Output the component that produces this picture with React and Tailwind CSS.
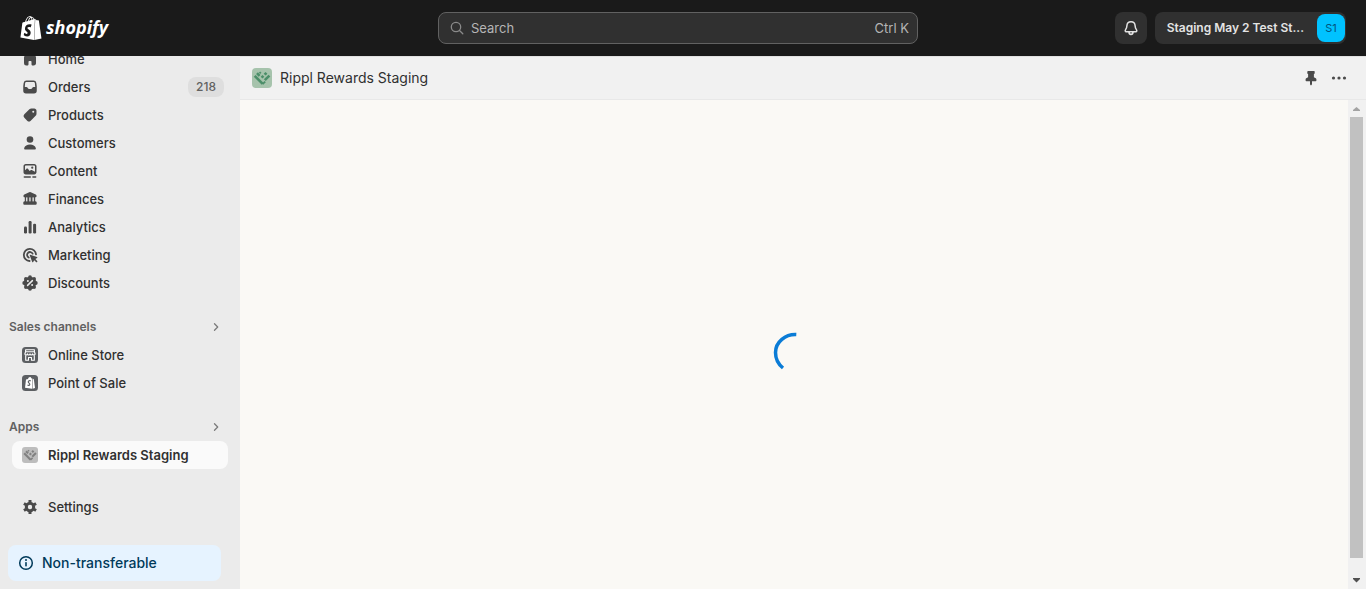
import React from "react";
import { SiShopify } from "react-icons/si";

function Glyph({ children, className = "size-5 shrink-0 text-[#4a4a4a]" }) {
  return (
    <svg viewBox="0 0 20 20" fill="currentColor" className={className} aria-hidden="true">
      {children}
    </svg>
  );
}

const HomeIcon = () => (
  <Glyph>
    <path d="M8.34 3.69a2.6 2.6 0 0 1 3.32 0l3.4 2.83c.6.5.94 1.24.94 2.02v5.7c0 1.24-1 2.26-2.25 2.26h-1c-.7 0-1.25-.56-1.25-1.25v-2.5a.75.75 0 0 0-.75-.75h-1.5a.75.75 0 0 0-.75.75v2.5c0 .69-.56 1.25-1.25 1.25h-1A2.25 2.25 0 0 1 4 14.25V8.54c0-.78.35-1.52.95-2.02z" />
  </Glyph>
);
const OrdersIcon = () => (
  <Glyph>
    <path
      fillRule="evenodd"
      d="M6.5 3.5h7a2.900 2.900 0 0 1 2.850 2.400l.4 3.100v4.750a2.750 2.750 0 0 1-2.750 2.750H6a2.750 2.750 0 0 1-2.750-2.750V9l.4-3.100A2.900 2.900 0 0 1 6.500 3.500ZM6.600 5C5.800 5 5.200 5.500 5.100 6.200L4.800 10h1.700c.5 0 .9.3 1.100.7l.3.6c.2.5.7.8 1.200.8h1.800c.5 0 1-.3 1.200-.8l.3-.6c.2-.4.6-.7 1.100-.7h1.700l-.3-3.800C14.800 5.500 14.200 5 13.400 5Z"
    />
  </Glyph>
);
const ProductsIcon = () => (
  <Glyph>
    <path
      fillRule="evenodd"
      d="M11.600 3.500h2.650c1.240 0 2.250 1 2.250 2.250v2.900c0 .8-.3 1.560-.87 2.120l-4.900 4.900a2.500 2.500 0 0 1-3.540 0l-2.860-2.860a2.500 2.500 0 0 1 0-3.540l5.070-5.070a3 3 0 0 1 2.200-.7Zm1.650 4.250a1 1 0 1 0 0-2 1 1 0 0 0 0 2Z"
    />
  </Glyph>
);
const CustomersIcon = () => (
  <Glyph>
    <circle cx="10" cy="6.500" r="3.300" />
    <path d="M10 11.500c-2.900 0-5.200 1.500-5.800 3.400-.3.900.4 1.600 1.300 1.600h9c.9 0 1.600-.7 1.300-1.600-.6-1.900-2.900-3.400-5.800-3.400Z" />
  </Glyph>
);
const ContentIcon = () => (
  <Glyph>
    <path
      fillRule="evenodd"
      d="M5.750 3h8.500c1.240 0 2.250 1 2.250 2.250v6c0 1.240-1 2.250-2.250 2.250h-8.500c-1.240 0-2.250-1-2.250-2.250v-6c0-1.240 1-2.250 2.250-2.250Zm0 1.500a.75.75 0 0 0-.75.75v3.900l1.300-1.200c.5-.5 1.300-.4 1.800.1L9.600 10l1-.8c.5-.4 1.100-.4 1.600 0l2.800 1.600V5.250a.75.75 0 0 0-.75-.75Zm6.500 3.300a1.100 1.100 0 1 0 0-2.200 1.100 1.100 0 0 0 0 2.200Z"
    />
    <rect x="3.600" y="15.200" width="7.400" height="1.500" rx=".7" />
    <rect x="12.200" y="15.200" width="4.200" height="1.500" rx=".7" />
  </Glyph>
);
const FinancesIcon = () => (
  <Glyph>
    <path d="M9.200 3.200a2 2 0 0 1 1.600 0l4.900 2.200c.5.2.8.7.8 1.200v.7c0 .6-.4 1-1 1h-.3v3.900l.9.4c.4.2.6.6.6 1v1.200c0 .5-.4.9-.9.900H4.200a.9.900 0 0 1-.9-.9v-1.200c0-.4.2-.8.6-1l.9-.4V8.300h-.3c-.6 0-1-.4-1-1v-.7c0-.5.3-1 .8-1.200Z" />
    <g fill="#ebebeb">
      <rect x="6.100" y="8.400" width="1.300" height="4" />
      <rect x="9.300" y="8.400" width="1.300" height="4" />
      <rect x="12.500" y="8.400" width="1.300" height="4" />
    </g>
  </Glyph>
);
const AnalyticsIcon = () => (
  <Glyph>
    <rect x="4" y="9.500" width="3" height="7" rx="1.200" />
    <rect x="8.600" y="4" width="3" height="12.500" rx="1.200" />
    <rect x="13.100" y="6.700" width="3" height="9.800" rx="1.200" />
  </Glyph>
);
const MarketingIcon = () => (
  <Glyph>
    <g fill="none" stroke="currentColor" strokeWidth="1.800" strokeLinecap="round">
      <path d="M9.600 16A6.100 6.100 0 1 1 16 9.400" />
      <path d="M8.700 12.500a2.900 2.900 0 1 1 3.900-3.900" />
    </g>
    <path d="m10.200 9.800 6.800 2.300c.5.2.5.8.1 1l-1.700 1 1.800 1.800c.6.7-.5 1.800-1.200 1.200l-1.800-1.800-1 1.700c-.2.4-.8.4-1-.1l-2.400-6.500c-.1-.4.1-.7.4-.6Z" />
  </Glyph>
);
const DiscountsIcon = () => (
  <Glyph>
    <circle cx="10" cy="10" r="6.300" />
    <circle cx="10" cy="4.200" r="1.900" />
    <circle cx="14.100" cy="5.900" r="1.900" />
    <circle cx="15.800" cy="10" r="1.900" />
    <circle cx="14.100" cy="14.100" r="1.900" />
    <circle cx="10" cy="15.800" r="1.900" />
    <circle cx="5.900" cy="14.100" r="1.900" />
    <circle cx="4.200" cy="10" r="1.900" />
    <circle cx="5.900" cy="5.900" r="1.900" />
    <path d="m7.600 12.400 4.800-4.800" stroke="#ebebeb" strokeWidth="1.500" strokeLinecap="round" />
    <circle cx="7.900" cy="8" r="1" fill="#ebebeb" />
    <circle cx="12.100" cy="12" r="1" fill="#ebebeb" />
  </Glyph>
);
const SettingsIcon = () => (
  <Glyph>
    <g fill="none" stroke="currentColor">
      <circle cx="10" cy="10" r="3.700" strokeWidth="3" />
      <path
        d="M10 3v2.400M10 14.600V17M3.940 6.500l2.080 1.200M13.980 12.300l2.080 1.200M16.060 6.500l-2.080 1.200M6.020 12.300l-2.080 1.200"
        strokeWidth="3"
      />
    </g>
  </Glyph>
);
const OnlineStoreIcon = () => (
  <Glyph>
    <rect x="2" y="2" width="16" height="16" rx="3.500" fill="#5c5f62" />
    <g fill="none" stroke="#fff" strokeWidth="1.100" strokeLinejoin="round">
      <path d="M5.600 4.800h8.800v2H5.600ZM5.600 6.800 4.800 9M14.400 6.800l.8 2.200" />
      <path d="M4.800 8.900c.4 1.500 2.300 1.500 2.600 0 .4 1.500 2.200 1.500 2.600 0 .4 1.500 2.200 1.500 2.600 0 .3 1.500 2.200 1.500 2.600 0" />
      <path d="M5.700 10.200v5.100h2.800v-2.800h3v2.800h2.800v-5.100" />
    </g>
  </Glyph>
);
const PosIcon = () => (
  <Glyph>
    <rect x="2" y="2" width="16" height="16" rx="3.500" fill="#5c5f62" />
    <path d="M6 6.500 8 6c.3-1.200 1.100-2 2-2 .7 0 1.200.6 1.300 1.300l.7.200v10.300L5 14.700Z" fill="#fff" />
    <path d="m12.500 5.600 1.300.6 1.200 8.800-2.500.8Z" fill="#fff" />
    <path
      d="M10.700 7.900C9.600 7.300 8.200 7.800 8.300 9c.1 1.100 1.700 1.200 1.500 2.400-.1 1.100-1.400 1.200-2.300.5"
      fill="none"
      stroke="#5c5f62"
      strokeWidth="1.200"
    />
  </Glyph>
);

function RipplShapes() {
  return (
    <g fill="none" stroke="currentColor" strokeWidth="2.600">
      <path d="m2.700 7.800 8 8" />
      <path d="m5 5.200 2.600 2.600" />
      <path d="m17.400 7.600-4.600 4.600" />
      <path d="m12.600 4.800 1.900 1.900" />
      <path d="m9.600 7.800 1.800 1.800" />
      <path d="m7.500 4.100 1.300 1.300" strokeWidth="1.800" />
      <path d="m13.200 13.600-2.600 2.600" strokeWidth="1.800" />
    </g>
  );
}
const RipplGrayIcon = () => (
  <Glyph>
    <rect x="2" y="2" width="16" height="16" rx="3" fill="#bdbdbd" />
    <g color="#808080" transform="translate(2 2) scale(.8)">
      <RipplShapes />
    </g>
  </Glyph>
);
const RipplIcon = () => (
  <Glyph>
    <rect width="20" height="20" rx="4" fill="#a6c3ac" />
    <g color="#4b8e69">
      <RipplShapes />
    </g>
  </Glyph>
);

const mainLinks = [
  { label: "Home", Icon: HomeIcon },
  { label: "Orders", Icon: OrdersIcon, badge: "218" },
  { label: "Products", Icon: ProductsIcon },
  { label: "Customers", Icon: CustomersIcon },
  { label: "Content", Icon: ContentIcon },
  { label: "Finances", Icon: FinancesIcon },
  { label: "Analytics", Icon: AnalyticsIcon },
  { label: "Marketing", Icon: MarketingIcon },
  { label: "Discounts", Icon: DiscountsIcon },
];

function NavLink({ label, Icon, badge, active }) {
  return (
    <li>
      <a
        href="#"
        aria-current={active ? "page" : undefined}
        className={
          active
            ? "flex h-7 items-center gap-2 rounded-lg bg-[#fafafa] pr-1 pl-2 font-semibold"
            : "flex h-7 items-center gap-2 rounded-lg pr-1 pl-2 font-medium"
        }
      >
        <Icon />
        <span className="flex-1 leading-5">{label}</span>
        {badge && (
          <span className="flex h-5 items-center rounded-lg bg-[#dedede] px-2 text-xs text-[#616161]">{badge}</span>
        )}
      </a>
    </li>
  );
}

function SectionButton({ label }) {
  return (
    <button type="button" className="mt-4 flex h-7 w-full items-center justify-between pr-3.5 pl-[9px] text-xs font-semibold text-[#616161]">
      {label}
      <Glyph className="size-5 text-[#7a7a7a]">
        <path d="m8.500 6.800 3.200 3.200-3.200 3.200" fill="none" stroke="currentColor" strokeWidth="1.300" strokeLinecap="round" strokeLinejoin="round" />
      </Glyph>
    </button>
  );
}

export default function App() {
  return (
    <div className="flex h-screen flex-col overflow-hidden bg-[#ebebeb] font-[Inter,sans-serif] text-[13px] leading-5 text-[#303030]">
      <header className="z-10 grid h-14 shrink-0 grid-cols-[1fr_480px_1fr] items-center bg-[#1a1a1a] px-5">
        <a href="#" aria-label="Shopify home" className="flex items-center gap-[3px] text-white">
          <SiShopify className="size-6 -ml-px" />
          <span className="pb-0.5 font-['Open_Sans',sans-serif] text-lg leading-6 font-bold italic">shopify</span>
        </a>
        <label className="-ml-[5px] flex h-8 w-[480px] items-center gap-1 rounded-lg border border-[#616161] bg-[#303030] px-2 text-[#b5b5b5]">
          <Glyph className="size-5 text-[#8a8a8a]">
            <g fill="none" stroke="currentColor" strokeWidth="1.300" strokeLinecap="round">
              <circle cx="9" cy="9" r="4.700" />
              <path d="m12.500 12.500 3.300 3.300" />
            </g>
          </Glyph>
          <input
            type="text"
            aria-label="Search"
            placeholder="Search"
            className="h-5 min-w-0 flex-1 bg-transparent leading-5 outline-none placeholder:text-[#b5b5b5]"
          />
          <kbd className="font-[Inter,sans-serif] text-[13px]">Ctrl K</kbd>
        </label>
        <div className="flex justify-end gap-2">
          <button type="button" aria-label="Notifications" className="flex size-8 items-center justify-center rounded-lg bg-[#303030] text-[#e3e3e3]">
            <Glyph className="size-5">
              <path
                d="M10 3.700c-2.300 0-4 1.700-4.100 4-.1 1.700-.3 2.700-1.300 3.900-.7.900-.5 2.100.7 2.100h9.400c1.200 0 1.400-1.200.7-2.100-1-1.200-1.200-2.200-1.300-3.900-.1-2.300-1.800-4-4.100-4ZM7.900 13.900c.1 1.500.9 2.500 2.100 2.500s2-1 2.100-2.500"
                fill="none"
                stroke="currentColor"
                strokeWidth="1.500"
                strokeLinejoin="round"
              />
            </Glyph>
          </button>
          <button type="button" className="flex h-8 items-center gap-[13px] rounded-lg bg-[#303030] pr-px pl-3 text-xs font-semibold text-[#e3e3e3]">
            Staging May 2 Test St...
            <span className="flex size-7 items-center justify-center rounded-lg bg-[#00c2ff] text-[11px] font-normal text-[#00527c]">S1</span>
          </button>
        </div>
      </header>

      <div className="flex min-h-0 flex-1">
        <aside className="flex w-60 shrink-0 flex-col overflow-hidden">
          <nav className="-mt-[11px] shrink-0">
            <ul className="px-3">
              {mainLinks.map((link) => (
                <NavLink key={link.label} {...link} />
              ))}
            </ul>
            <SectionButton label="Sales channels" />
            <ul className="px-3">
              <NavLink label="Online Store" Icon={OnlineStoreIcon} />
              <NavLink label="Point of Sale" Icon={PosIcon} />
            </ul>
            <SectionButton label="Apps" />
            <ul className="px-3">
              <NavLink label="Rippl Rewards Staging" Icon={RipplGrayIcon} active />
            </ul>
            <ul className="mt-6 px-3">
              <NavLink label="Settings" Icon={SettingsIcon} />
            </ul>
          </nav>
          <div className="mt-auto mr-[19px] mb-2 ml-2 shrink-0">
            <button type="button" className="flex h-9 w-full items-center gap-1.5 rounded-lg bg-[#e6f3ff] px-2 text-sm font-medium text-[#003a5a]">
              <Glyph className="size-5">
                <circle cx="10" cy="10" r="6.300" fill="none" stroke="currentColor" strokeWidth="1.500" />
                <rect x="9.200" y="9" width="1.600" height="4.500" rx=".7" />
                <circle cx="10" cy="7" r="1" />
              </Glyph>
              Non-transferable
            </button>
          </div>
        </aside>

        <main className="flex min-w-0 flex-1 flex-col">
          <div className="flex h-11 shrink-0 items-center gap-2 border-y border-t-[#e1e1e1] border-b-[#e8e8e8] bg-[#f1f1f1] pr-[13px] pl-3">
            <RipplIcon />
            <h1 className="flex-1 text-sm">Rippl Rewards Staging</h1>
            <button type="button" aria-label="Unpin app" className="flex w-7 justify-center">
              <Glyph>
                <path d="M7.100 3h5.800c.6 0 .8.400.8.900v1.400c0 .4-.3.700-.8.700v3.200l1.900 1c.4.300.6.600.6 1v1.300c0 .4-.3.700-.7.700H11v2.600c0 .900-.4 1.500-1 1.500s-1-.6-1-1.500v-2.600H5.300c-.4 0-.7-.3-.7-.7v-1.300c0-.4.2-.7.6-1l1.900-1V6c-.5 0-.8-.3-.8-.7V3.900c0-.5.2-.9.8-.9Z" />
              </Glyph>
            </button>
            <button type="button" aria-label="More actions" className="-ml-2 flex w-7 justify-center">
              <Glyph>
                <circle cx="4.500" cy="10" r="1.600" />
                <circle cx="10" cy="10" r="1.600" />
                <circle cx="15.500" cy="10" r="1.600" />
              </Glyph>
            </button>
          </div>
          <div className="flex min-h-0 flex-1">
            <div role="status" aria-label="Loading" className="flex flex-1 items-center justify-center bg-[#faf9f5] pt-4">
              <svg viewBox="0 0 44 44" className="size-11" fill="none" stroke="#0a7cd6" strokeWidth="3.500">
                <path d="M24.300 3.500C13.500 3 3.500 11 3.500 21.500c0 6 2.500 11.500 7.500 15.500" />
              </svg>
            </div>
            <div aria-hidden="true" className="flex w-[18px] flex-col items-center bg-[#f1f1f1] pr-[1px]">
              <svg viewBox="0 0 17 17" className="size-[17px]" fill="#a3a3a3">
                <path d="M5 11h7v-1L8.500 7 5 10Z" />
              </svg>
              <div className="mb-3.5 w-[13px] flex-1 bg-[#c1c1c1]" />
              <svg viewBox="0 0 17 17" className="size-[17px]" fill="#505050">
                <path d="M5 6h7v1L8.500 10.500 5 7Z" />
              </svg>
            </div>
          </div>
        </main>
      </div>
    </div>
  );
}
